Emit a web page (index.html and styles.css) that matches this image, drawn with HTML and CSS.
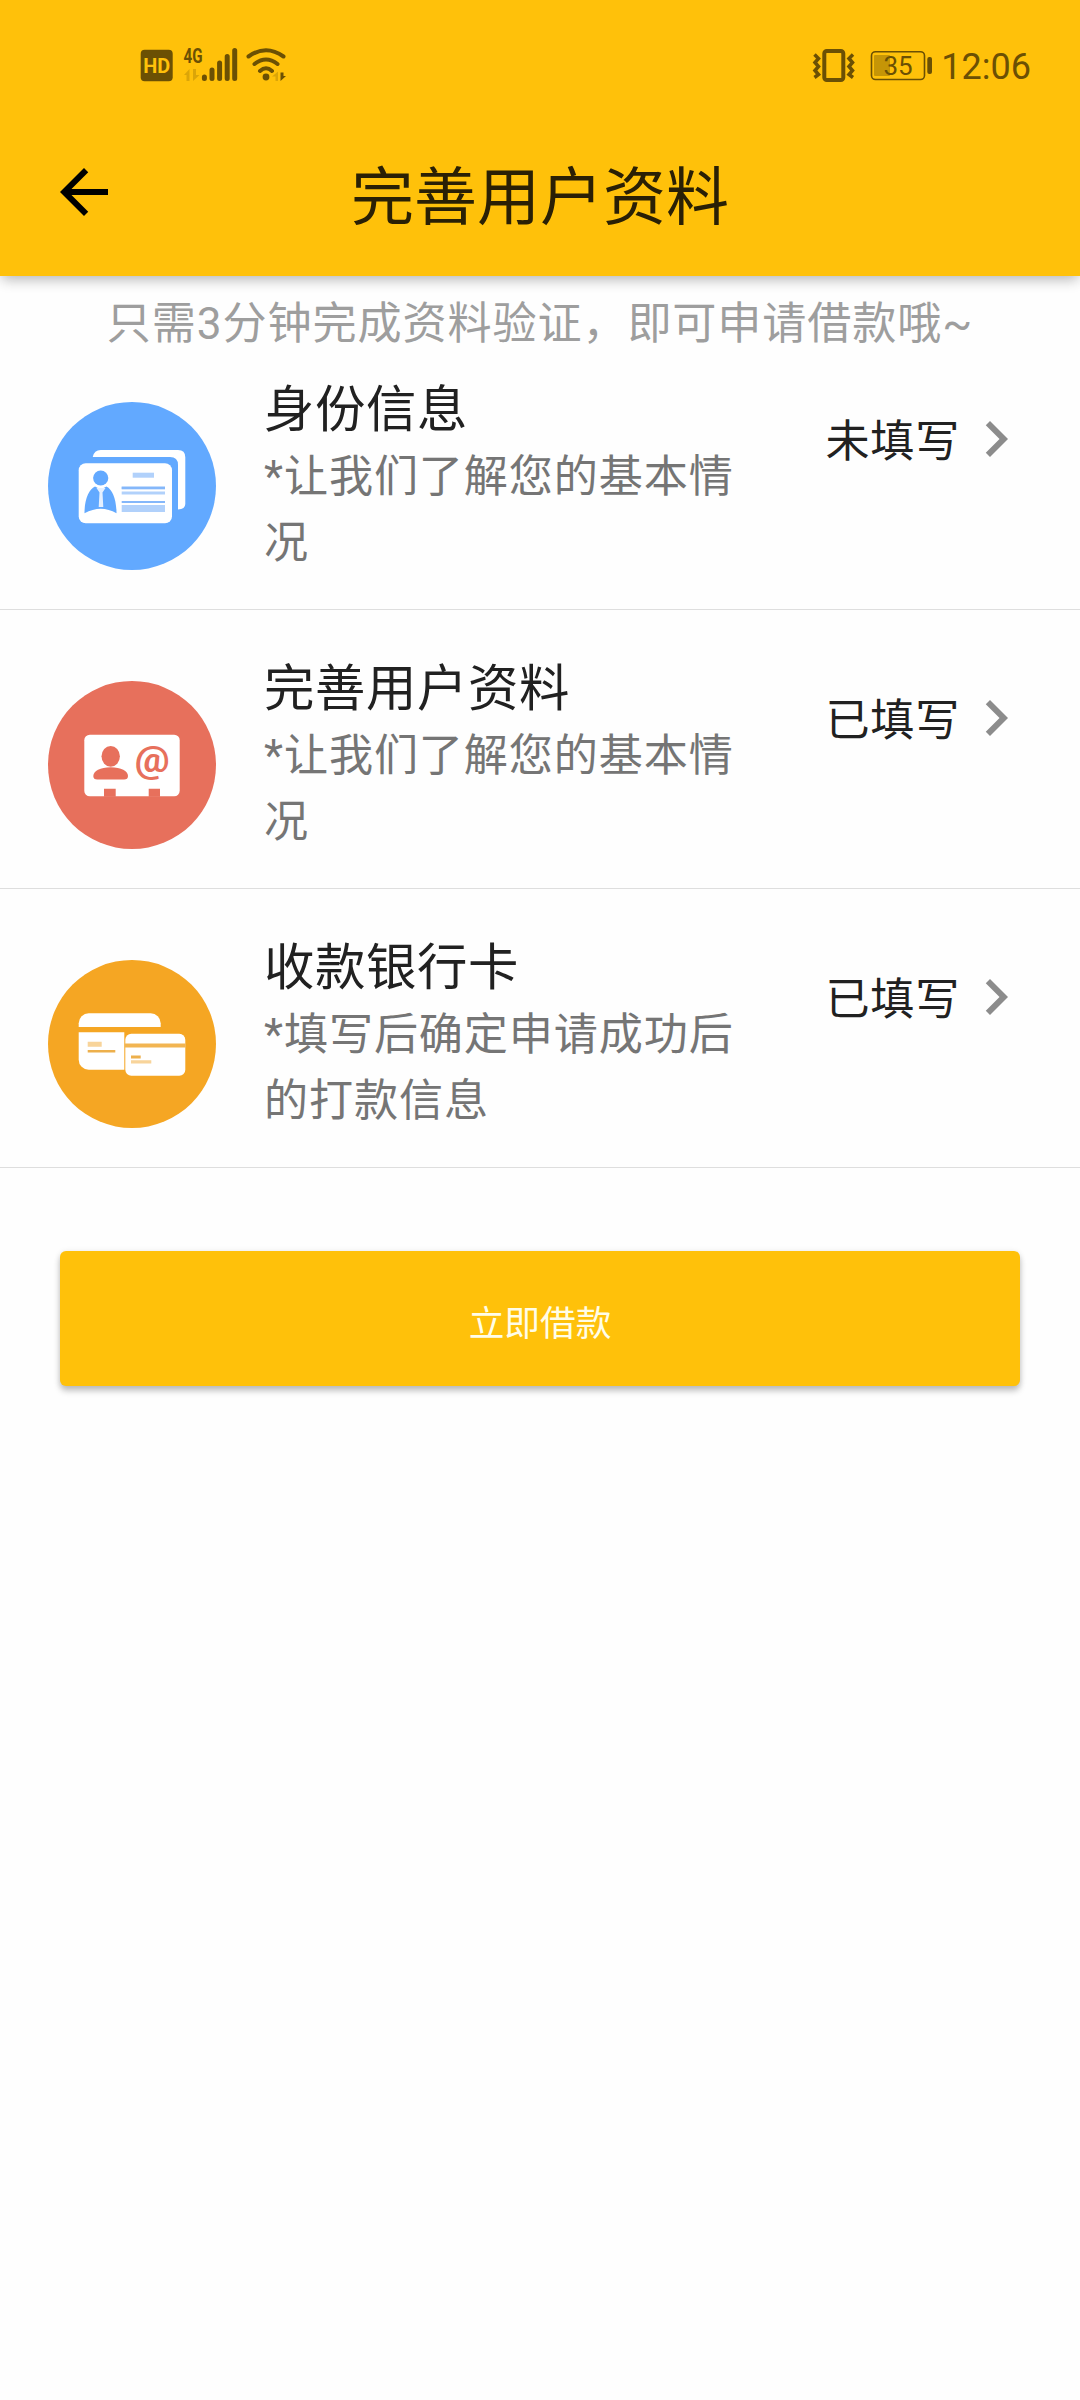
FILE: index.html
```
<!DOCTYPE html>
<html lang="zh-CN">
<head>
  <meta charset="UTF-8">
  <meta name="viewport" content="width=device-width, initial-scale=1.0">
  <title>完善用户资料</title>
  <link rel="stylesheet" href="styles.css">
</head>
<body>
  <header class="header">
    <!-- Status bar -->
    <div class="status-bar">
      <svg class="status-left" width="150" height="40" viewBox="138 45 150 40">
        <rect x="140.7" y="49.7" width="32" height="31.6" rx="4"/>
        <text class="hd" x="143.3" y="72.6" textLength="27" lengthAdjust="spacingAndGlyphs">HD</text>
        <text class="net" x="183.5" y="62.8" textLength="19" lengthAdjust="spacingAndGlyphs">4G</text>
        <path class="faint" d="M184 75l5.500-6v12h-3v-6zM193 69v12l6.500-6h-3.500v-6z"/>
        <g class="bars">
          <path d="M204.400 77v1.500M212 70v8.500M219.600 63v15.500M227.200 56.500v22M234.700 50.500v28"/>
        </g>
        <g class="arcs">
          <path d="M248.500 56.500q17.500-12.500 35 0M254.500 64q11.500-9 23 0M260 71q6-5.500 12 0"/>
        </g>
        <circle cx="266" cy="77" r="3.400"/>
        <path class="faint" d="M272 76.500l6-5v9.500h-2.500v-4.500z"/>
        <path d="M280.500 72.500v8.500l5.500-5h-2.500v-3.500z"/>
      </svg>
      <div class="status-right">
        <svg width="124" height="40" viewBox="811 45 124 40">
          <rect class="phone" x="824.300" y="51" width="19" height="29" rx="2.500"/>
          <path class="zigzag" d="M814.500 54.500l4 4-3.500 4 3.500 4-3.500 4 3.500 4-4 3M853 54.500l-4 4 3.500 4-3.500 4 3.500 4-3.500 4 4 3"/>
          <rect class="battery" x="871.500" y="51.700" width="53" height="27.800" rx="4"/>
          <rect class="charge" x="874" y="55" width="16" height="21" rx="1"/>
          <text class="percent" x="883.500" y="75.300">35</text>
          <rect x="927.300" y="57" width="4.700" height="17" rx="2"/>
        </svg>
        <span class="clock">12:06</span>
      </div>
    </div>
    <!-- App bar -->
    <div class="app-bar">
      <svg class="back" viewBox="0 0 24 24"><path d="M20 11H7.830l5.590-5.590L12 4l-8 8 8 8 1.410-1.410L7.830 13H20v-2z"/></svg>
      <h1>完善用户资料</h1>
    </div>
  </header>

  <p class="hint">只需3分钟完成资料验证，即可申请借款哦~</p>

  <main class="list">
    <div class="item">
      <svg class="icon" viewBox="0 0 168 168">
        <circle cx="84" cy="84" r="84" fill="#62a9ff"/>
        <path fill="#fff" d="M44.700 55q1.500-7 8-7H130q7.300 0 7.300 7.300V102q0 5-7.300 5.500V63q0-8-8-8z"/>
        <rect x="30.700" y="61.300" width="93.300" height="60" rx="7" fill="#fff"/>
        <g fill="#62a9ff">
          <circle cx="52.700" cy="76" r="7.600"/>
          <path d="M47 84.500q5.700 4 11.500 0c6 3 10 13 10 26.800q-15.500-9-32 0c0-14 4.500-24 10.500-26.800z"/>
        </g>
        <path fill="#e5f0ff" d="M48.500 86h9l-3 4.500.8 14.500h-4.600l.8-14.500z"/>
        <g fill="#b1d1fb">
          <rect x="84.700" y="70.700" width="21.300" height="5"/>
          <rect x="73.700" y="84.500" width="43.300" height="8"/>
          <rect x="73.700" y="103" width="43.300" height="7"/>
        </g>
        <path stroke="#fff" stroke-width="2.200" d="M73 88.500h45"/>
        <path stroke="#84b7fa" stroke-width="2.200" d="M73.700 85.800H117M73.700 100H117"/>
      </svg>
      <div class="info">
        <h2>身份信息</h2>
        <p>*让我们了解您的基本情况</p>
      </div>
      <div class="state">
        <span>未填写</span>
        <svg viewBox="0 0 24 24"><path d="M10 6L8.590 7.410 13.170 12l-4.580 4.590L10 18l6-6z"/></svg>
      </div>
    </div>

    <div class="item">
      <svg class="icon" viewBox="0 0 168 168">
        <circle cx="84" cy="84" r="84" fill="#e7705c"/>
        <rect x="36.300" y="53.700" width="95.400" height="61.600" rx="5.500" fill="#fff"/>
        <g fill="#e7705c">
          <path d="M56 107.700h11.700v8H56zM100.700 107.700H112v8h-11.300z"/>
          <ellipse cx="62.700" cy="75.300" rx="9.200" ry="10.400"/>
          <path d="M45.300 95c0-5 7-8.700 17.400-8.700S80 90 80 95q0 3.500-4 3.500H49.300q-4 0-4-3.500z"/>
          <text class="at" x="86.700" y="91" textLength="35" lengthAdjust="spacingAndGlyphs">@</text>
        </g>
      </svg>
      <div class="info">
        <h2>完善用户资料</h2>
        <p>*让我们了解您的基本情况</p>
      </div>
      <div class="state">
        <span>已填写</span>
        <svg viewBox="0 0 24 24"><path d="M10 6L8.590 7.410 13.170 12l-4.580 4.590L10 18l6-6z"/></svg>
      </div>
    </div>

    <div class="item">
      <svg class="icon" viewBox="0 0 168 168">
        <circle cx="84" cy="84" r="84" fill="#f5a623"/>
        <rect x="30.700" y="53.300" width="82" height="56.400" rx="10" fill="#fff"/>
        <path fill="#f5a623" d="M30 67h84v5.300H30zM76.300 72h38v40h-38z"/>
        <rect x="77.300" y="73.700" width="60" height="42" rx="6" fill="#fff"/>
        <path fill="#f2b552" d="M76.700 83.500h61v4h-61z"/>
        <path fill="#f8d49a" d="M39.700 81.700h14v5h-14zM83 100.300h20.300v3.200H83z"/>
        <path fill="#edb04c" d="M39.700 90h27.600v2.600H39.700zM83 95.500h9.700v3H83z"/>
      </svg>
      <div class="info">
        <h2>收款银行卡</h2>
        <p>*填写后确定申请成功后的打款信息</p>
      </div>
      <div class="state">
        <span>已填写</span>
        <svg viewBox="0 0 24 24"><path d="M10 6L8.590 7.410 13.170 12l-4.580 4.590L10 18l6-6z"/></svg>
      </div>
    </div>
  </main>

  <button class="submit" type="button">立即借款</button>
</body>
</html>
```
FILE: styles.css
```
:root {
  --primary: #ffc10a;
  --statusColor: #6b5004;
  --textColor: #212121;
}
* {
  box-sizing: border-box;
}
body {
  margin: 0;
  min-height: 2400px;
  background-color: #fefefe;
  color: var(--textColor);
  font-family: Roboto, "Noto Sans CJK SC", sans-serif;
}
h1, h2, p {
  margin: 0;
  font-weight: 400;
}
/* Yellow area: status bar + app bar */
.header {
  height: 276px;
  background-color: var(--primary);
  box-shadow: 0 6px 12px -3px rgba(0, 0, 0, 0.2), 0 3px 15px rgba(0, 0, 0, 0.12);
}
.status-bar {
  display: flex;
  justify-content: space-between;
  height: 108px;
  padding: 45px 49px 0 138px;
  fill: var(--statusColor);
  color: var(--statusColor);
}
.status-right {
  display: flex;
  gap: 6px;
}
.clock {
  font-size: 36px;
  line-height: 44px;
}
.hd {
  font-size: 21px;
  font-weight: 700;
  fill: var(--primary);
}
.net {
  font-size: 21px;
  font-weight: 700;
}
.status-bar .faint {
  fill: #dba508;
}
.bars, .arcs {
  fill: none;
  stroke: var(--statusColor);
  stroke-width: 5;
  stroke-linecap: round;
}
.arcs {
  stroke-width: 4;
}
.phone {
  fill: none;
  stroke: var(--statusColor);
  stroke-width: 4;
}
.zigzag {
  fill: none;
  stroke: var(--statusColor);
  stroke-width: 3.5;
}
.battery {
  fill: none;
  stroke: var(--statusColor);
  stroke-width: 1.6;
}
.charge {
  fill: #c59507;
}
.percent {
  font-size: 26px;
}
.app-bar {
  display: grid;
  grid-template-columns: 72px 1fr 72px;
  align-items: center;
  height: 168px;
  padding: 0 48px;
}
.back {
  width: 72px;
  height: 72px;
}
.app-bar h1 {
  padding-top: 11px;
  font-size: 63px;
  line-height: 90px;
  text-align: center;
  color: #2a2005;
}
/* Grey line under the app bar */
.hint {
  height: 55px;
  padding-top: 15px;
  font-size: 44.1px;
  line-height: 66px;
  letter-spacing: 0.9px;
  text-align: center;
  color: #9e9e9e;
}
.item {
  display: flex;
  align-items: flex-start;
  height: 279px;
  padding: 0 48px;
  border-bottom: 1px solid #dedede;
}
.icon {
  width: 168px;
  height: 168px;
  margin-top: 71px;
  flex-shrink: 0;
}
.at {
  font-size: 37px;
  font-weight: 700;
}
.info {
  width: 490px;
  margin: 43px 0 0 48px;
}
.info h2 {
  height: 70px;
  font-size: 50.4px;
  line-height: 72px;
  letter-spacing: 0.6px;
}
.info p {
  font-size: 44.1px;
  line-height: 66px;
  letter-spacing: 0.9px;
  color: #757575;
}
/* Filled / not filled, with chevron */
.state {
  display: flex;
  align-items: center;
  height: 72px;
  margin: 72px 0 0 auto;
  font-size: 44.1px;
  letter-spacing: 0.75px;
}
.state span {
  padding-bottom: 2px;
}
.state svg {
  width: 72px;
  height: 72px;
  fill: #8c8c8c;
}
.submit {
  display: block;
  width: 960px;
  height: 135px;
  margin: 83px auto 0;
  padding: 3px 0 0;
  border: 0;
  border-radius: 6px;
  background-color: var(--primary);
  box-shadow: 0 5px 6px rgba(0, 0, 0, 0.22), 0 1px 6px rgba(0, 0, 0, 0.1);
  color: #fffde8;
  font: 35.7px Roboto, "Noto Sans CJK SC", sans-serif;
}
```
